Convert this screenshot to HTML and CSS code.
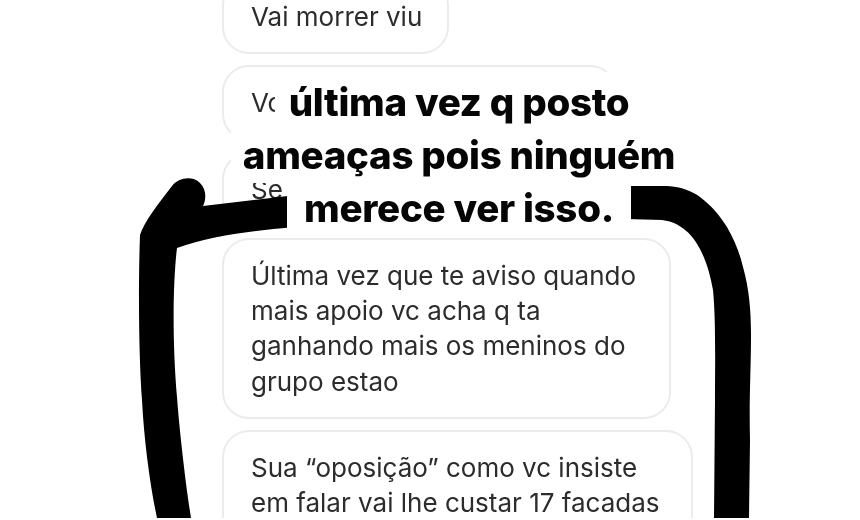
FILE: index.html
```html
<!DOCTYPE html>
<html lang="pt">
<head>
<meta charset="utf-8">
<title>Ameaças</title>
<link rel="stylesheet" href="styles.css">
</head>
<body>
<main class="stage">
  <section class="chat">
    <p class="bubble w-227">Vai morrer viu</p>
    <p class="bubble w-395">Vc</p>
    <p class="bubble w-280">Se</p>
    <p class="bubble w-449">Última vez que te aviso quando<br>mais apoio vc acha q ta<br>ganhando mais os meninos do<br>grupo estao</p>
    <p class="bubble w-471">Sua “oposição” como vc insiste<br>em falar vai lhe custar 17 facadas</p>
  </section>
  <svg class="marks" viewBox="0 0 860 518" width="860" height="518" aria-hidden="true">
    <path class="mark" d="M140 235 C144 222 158 204 172 186 C178 178 192 175 200 183 C207 190 206 200 203 206 L296 195 L296 227 C250 231 210 236 177 248 C173 280 172 340 177 397 C179 425 185 480 191 518 L157 518 C150 485 144 440 142 400 C139 360 138 290 140 235 Z"/>
    <path class="mark" d="M626 186 L667 186 C682 187 692 191 700 197 C712 206 720 216 727 227 C735 241 740 254 743 267 C749 288 751 310 751 335 C751 370 749 400 750 440 L749 518 L714 518 L715 400 C715 370 716 320 713 290 C708 262 696 224 662 220 L626 219 Z"/>
  </svg>
  <div class="caption">
    <span class="line line-a">última vez q posto</span>
    <span class="line line-b">ameaças pois ninguém</span>
    <span class="line line-c">merece ver isso.</span>
  </div>
</main>
</body>
</html>
```
FILE: styles.css
```css
html, body {
  margin: 0;
  background: #fff;
}

.stage {
  position: relative;
  width: 860px;
  height: 518px;
  overflow: hidden;
  background: #fff;
  filter: blur(0.5px);
}

.chat {
  display: flex;
  flex-direction: column;
  align-items: flex-start;
  gap: 11px;
  margin-top: -21px;
  padding-left: 222px;
}

.bubble {
  margin: 0;
  box-sizing: border-box;
  padding: 18px 27px;
  border: 2px solid #ebebeb;
  border-radius: 27px;
  font-family: Inter, "Liberation Sans", sans-serif;
  font-size: 26px;
  line-height: 35.3px;
  color: #2c2c2e;
  white-space: nowrap;
  background: #fff;
}

.w-227 { width: 227px; }
.w-395 { width: 395px; }
.w-280 { width: 280px; }
.w-449 { width: 449px; }
.w-471 { width: 471px; }

.marks {
  position: absolute;
  left: 0;
  top: 0;
}

.mark {
  fill: #000;
}

.caption {
  position: absolute;
  left: 58px;
  top: 72px;
  width: 802px;
  display: flex;
  flex-direction: column;
  align-items: center;
  font-family: Inter, "Liberation Sans", sans-serif;
  font-size: 38.5px;
  font-weight: 800;
  line-height: 53px;
  letter-spacing: -0.3px;
  color: #050505;
}

.line {
  background: #fff;
  white-space: nowrap;
}

.line-a { padding: 4px 14px 0; }
.line-b { padding: 0 12px 1px; }
.line-c { margin-top: -1px; padding: 0 17px; }
```
